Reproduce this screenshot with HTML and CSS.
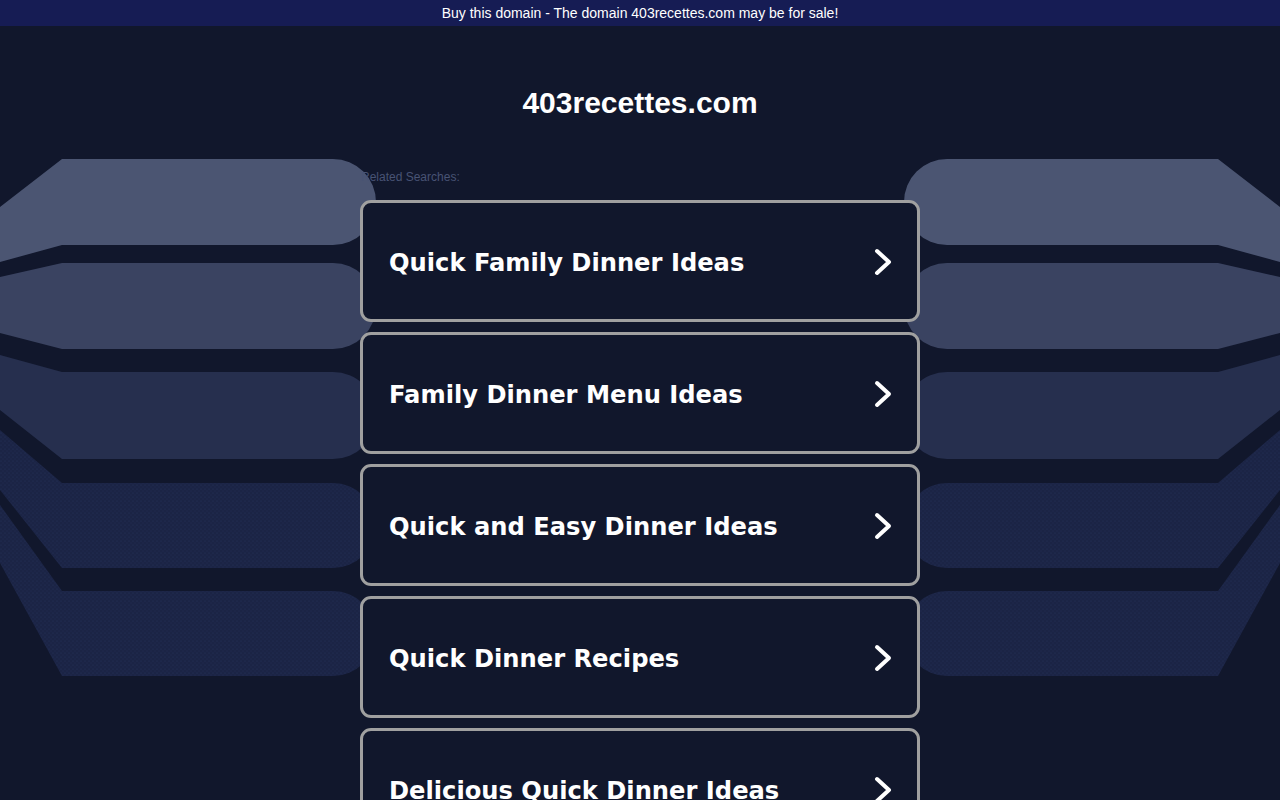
FILE: index.html
```html
<!DOCTYPE html>
<html lang="en">
<head>
<meta charset="utf-8">
<title>403recettes.com</title>
<link rel="stylesheet" href="styles.css">
</head>
<body>
<div class="backdrop" aria-hidden="true">
  <svg class="backdrop-svg" width="1280" height="800" viewBox="0 0 1280 800">
    <defs>
      <pattern id="dots" width="4" height="4" patternUnits="userSpaceOnUse">
        <rect width="4" height="4" fill="#1b2445"/>
        <circle cx="1" cy="1" r="0.6" fill="#26305a"/>
        <circle cx="3" cy="3" r="0.6" fill="#222b52"/>
      </pattern>
      <g id="side">
        <path d="M0,207 L62,159 L333,159 A43,43 0 0 1 333,245 L62,245 L0,262 Z" fill="#4b5572"/>
        <path d="M0,277 L62,263 L333,263 A43,43 0 0 1 333,349 L62,349 L0,333 Z" fill="#3a4361"/>
        <path d="M0,355 L62,372 L333,372 A43.5,43.5 0 0 1 333,459 L62,459 L0,410 Z" fill="#262f4e"/>
        <path d="M0,430 L62,483 L333,483 A42.5,42.5 0 0 1 333,568 L62,568 L0,490 Z" fill="url(#dots)"/>
        <path d="M0,505 L62,591 L333,591 A42.5,42.5 0 0 1 333,676 L62,676 L0,563 Z" fill="url(#dots)"/>
      </g>
    </defs>
    <use href="#side"/>
    <use href="#side" transform="translate(1280,0) scale(-1,1)"/>
  </svg>
</div>

<div class="topbar">Buy this domain - The domain 403recettes.com may be for sale!</div>

<main class="content">
  <h1 class="domain">403recettes.com</h1>
  <div class="label">Related Searches:</div>
  <div class="list">
    <a class="card" href="#"><span class="card-text">Quick Family Dinner Ideas</span><svg class="chev" width="20" height="30" viewBox="0 0 20 30"><polyline points="4,4 16,15 4,26" fill="none" stroke="#fff" stroke-width="4" stroke-linecap="round" stroke-linejoin="round"/></svg></a>
    <a class="card" href="#"><span class="card-text">Family Dinner Menu Ideas</span><svg class="chev" width="20" height="30" viewBox="0 0 20 30"><polyline points="4,4 16,15 4,26" fill="none" stroke="#fff" stroke-width="4" stroke-linecap="round" stroke-linejoin="round"/></svg></a>
    <a class="card" href="#"><span class="card-text">Quick and Easy Dinner Ideas</span><svg class="chev" width="20" height="30" viewBox="0 0 20 30"><polyline points="4,4 16,15 4,26" fill="none" stroke="#fff" stroke-width="4" stroke-linecap="round" stroke-linejoin="round"/></svg></a>
    <a class="card" href="#"><span class="card-text">Quick Dinner Recipes</span><svg class="chev" width="20" height="30" viewBox="0 0 20 30"><polyline points="4,4 16,15 4,26" fill="none" stroke="#fff" stroke-width="4" stroke-linecap="round" stroke-linejoin="round"/></svg></a>
    <a class="card" href="#"><span class="card-text">Delicious Quick Dinner Ideas</span><svg class="chev" width="20" height="30" viewBox="0 0 20 30"><polyline points="4,4 16,15 4,26" fill="none" stroke="#fff" stroke-width="4" stroke-linecap="round" stroke-linejoin="round"/></svg></a>
  </div>
</main>
</body>
</html>
```

FILE: styles.css
```css
html, body {
  margin: 0;
  padding: 0;
}

body {
  background: #11172c;
  font-family: "Liberation Sans", Arial, sans-serif;
  color: #fff;
  height: 800px;
  overflow: hidden;
  position: relative;
}

.backdrop {
  position: absolute;
  left: 0;
  top: 0;
  width: 1280px;
  height: 800px;
  z-index: 0;
}

.backdrop-svg {
  display: block;
}

.topbar {
  position: relative;
  z-index: 1;
  height: 26px;
  line-height: 26px;
  background: #161c54;
  color: #fff;
  font-size: 14px;
  text-align: center;
}

.content {
  position: relative;
  z-index: 1;
  width: 560px;
  margin: 0 auto;
  padding-top: 59px;
}

.domain {
  margin: 0;
  font-size: 30px;
  line-height: 36px;
  font-weight: bold;
  text-align: center;
  color: #fff;
}

.label {
  margin-top: 49px;
  padding-left: 1px;
  font-size: 12px;
  line-height: 14px;
  color: #485374;
}

.list {
  margin-top: 16px;
  display: flex;
  flex-direction: column;
  gap: 10px;
}

.card {
  box-sizing: border-box;
  height: 122px;
  display: flex;
  align-items: center;
  justify-content: space-between;
  padding: 3px 26px 0;
  border: 3px solid #a0a0a0;
  border-radius: 11px;
  background: #11172c;
  text-decoration: none;
  color: #fff;
}

.card-text {
  font-family: "DejaVu Sans", Verdana, sans-serif;
  font-weight: bold;
  font-size: 24.2px;
  color: #fff;
}

.chev {
  display: block;
  margin-right: -2px;
  margin-top: -2px;
}
```
